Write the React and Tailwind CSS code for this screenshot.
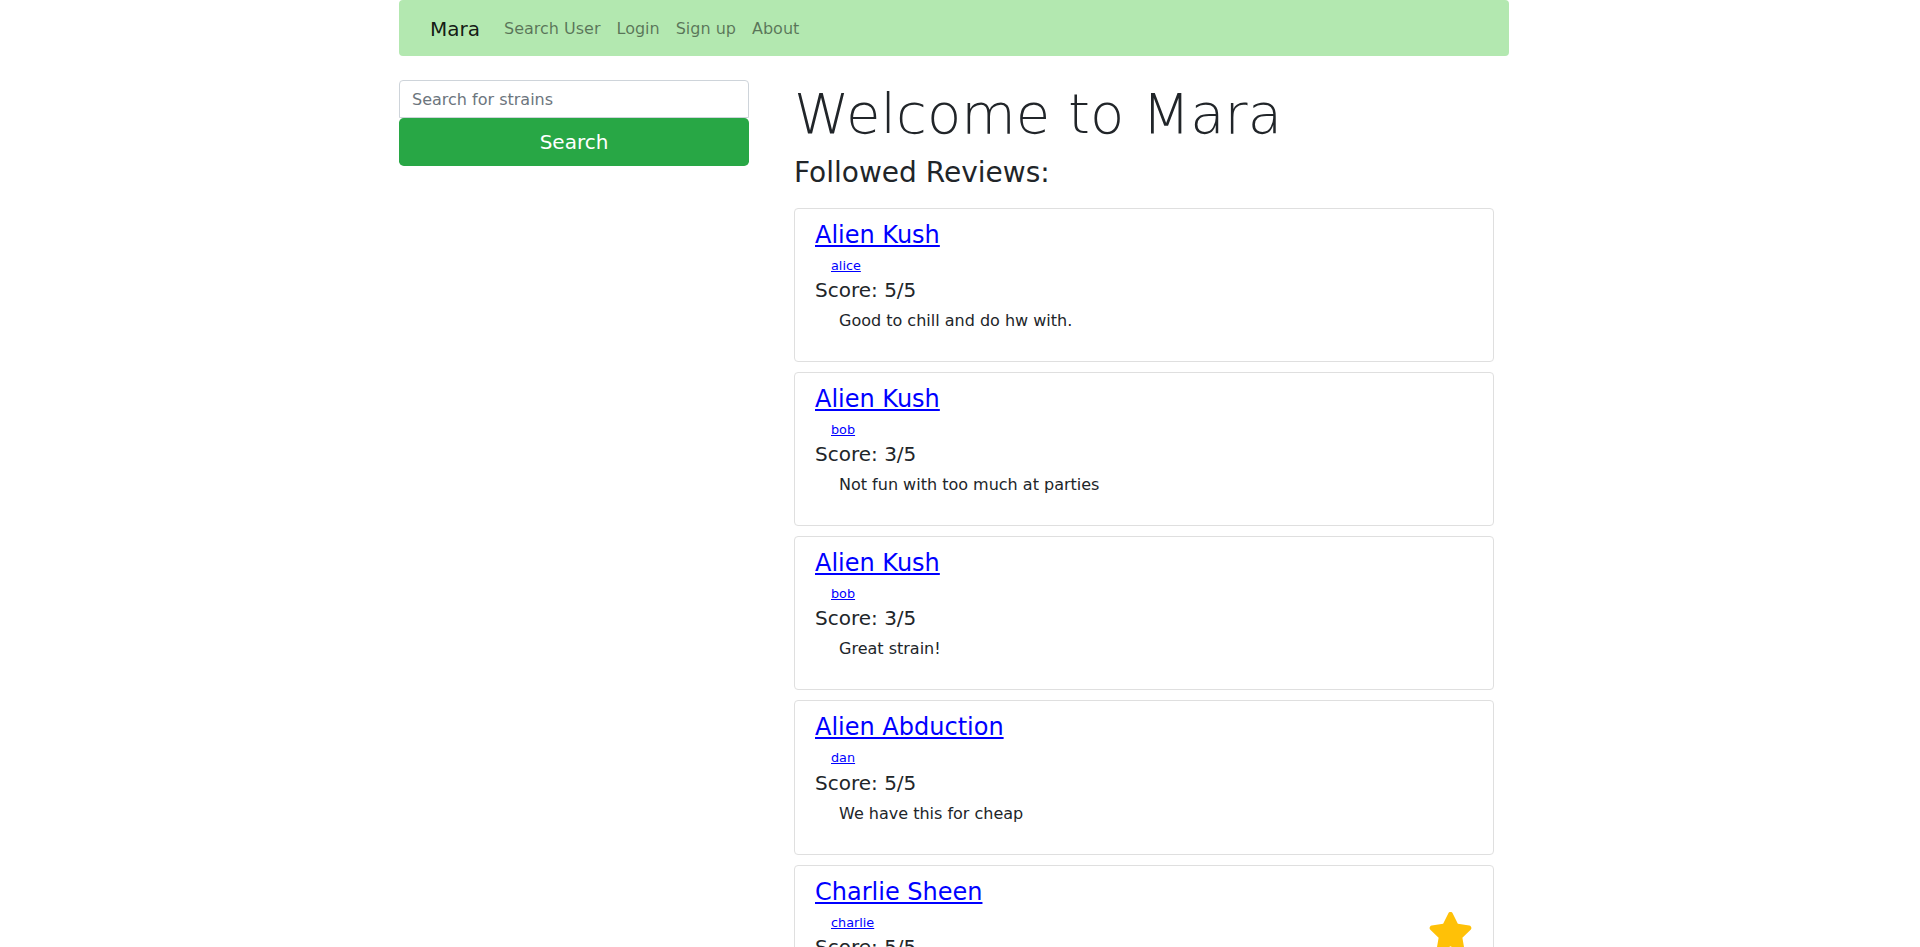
import React from 'react';

const reviews = [
  { strain: 'Alien Kush', user: 'alice', score: 5, text: 'Good to chill and do hw with.' },
  { strain: 'Alien Kush', user: 'bob', score: 3, text: 'Not fun with too much at parties' },
  { strain: 'Alien Kush', user: 'bob', score: 3, text: 'Great strain!' },
  { strain: 'Alien Abduction', user: 'dan', score: 5, text: 'We have this for cheap' },
  { strain: 'Charlie Sheen', user: 'charlie', score: 5, text: 'Winning.', starred: true },
];

function Star() {
  return (
    <svg viewBox="0 0 576 512" className="w-[45px] h-[40px] fill-[#ffc107]">
      <path d="M259.3 17.8L194 150.2 47.9 171.5c-26.2 3.8-36.7 36.1-17.7 54.6l105.7 103-25 145.5c-4.5 26.3 23.2 46 46.4 33.7L288 439.6l130.7 68.7c23.2 12.2 50.9-7.4 46.4-33.7l-25-145.5 105.7-103c19-18.5 8.5-50.8-17.7-54.6L382 150.2 316.7 17.8c-11.7-23.6-45.6-23.9-57.4 0z" />
    </svg>
  );
}

function ReviewCard({ review }) {
  return (
    <div className="relative my-[10px] border border-[#dfdfdf] rounded-[4px] bg-white px-[20px] pt-[12px] pb-[28px]">
      <a href="#" className="block w-max text-[24px] leading-[29px] text-[#0000ff] underline">
        {review.strain}
      </a>
      <a href="#" className="block w-max mt-[6px] ml-[16px] text-[12.8px] leading-[19.2px] text-[#0000ff] underline">
        {review.user}
      </a>
      <div className="mt-[3px] text-[20px] leading-[24px] text-[#212529]">Score: {review.score}/5</div>
      <p className="mt-[7px] ml-[24px] text-[16px] leading-[24px] text-[#212529]">{review.text}</p>
      {review.starred && (
        <div className="absolute top-[46px] right-[20px]">
          <Star />
        </div>
      )}
    </div>
  );
}

export default function App() {
  return (
    <div className="min-h-screen bg-white font-['DejaVu_Sans',sans-serif] text-[#212529]">
      <div className="w-[1110px] ml-[399px]">
        {/* Navbar */}
        <nav className="h-[56px] bg-[#b3e8b0] rounded-[4px] flex items-center pl-[31px] pt-[2px]">
          <span className="text-[20px] leading-[30px] text-black/90 mr-[16px]">Mara</span>
          <div className="flex items-center text-[16px] leading-[24px] text-black/50">
            <span className="px-[8px]">Search User</span>
            <span className="px-[8px]">Login</span>
            <span className="px-[8px]">Sign up</span>
            <span className="px-[8px]">About</span>
          </div>
        </nav>

        <div className="flex mt-[24px]">
          {/* Left column: strain search */}
          <div className="w-[350px] shrink-0">
            <input
              type="text"
              placeholder="Search for strains"
              className="block w-full h-[38px] px-[12px] border border-[#ced4da] rounded-t-[4px] text-[16px] placeholder:text-[#6c757d] outline-none"
            />
            <button className="block w-full h-[48px] bg-[#28a745] text-white text-[20px] rounded-[4.8px]">
              Search
            </button>
          </div>

          {/* Right column: feed */}
          <div className="w-[700px] ml-[45px]">
            <h1 className="text-[56px] leading-[67.2px] font-light mb-[9px]">Welcome to Mara</h1>
            <h3 className="text-[28px] leading-[33.6px] mb-[18px]">Followed Reviews:</h3>
            {reviews.map((r, i) => (
              <ReviewCard key={i} review={r} />
            ))}
          </div>
        </div>
      </div>
    </div>
  );
}
